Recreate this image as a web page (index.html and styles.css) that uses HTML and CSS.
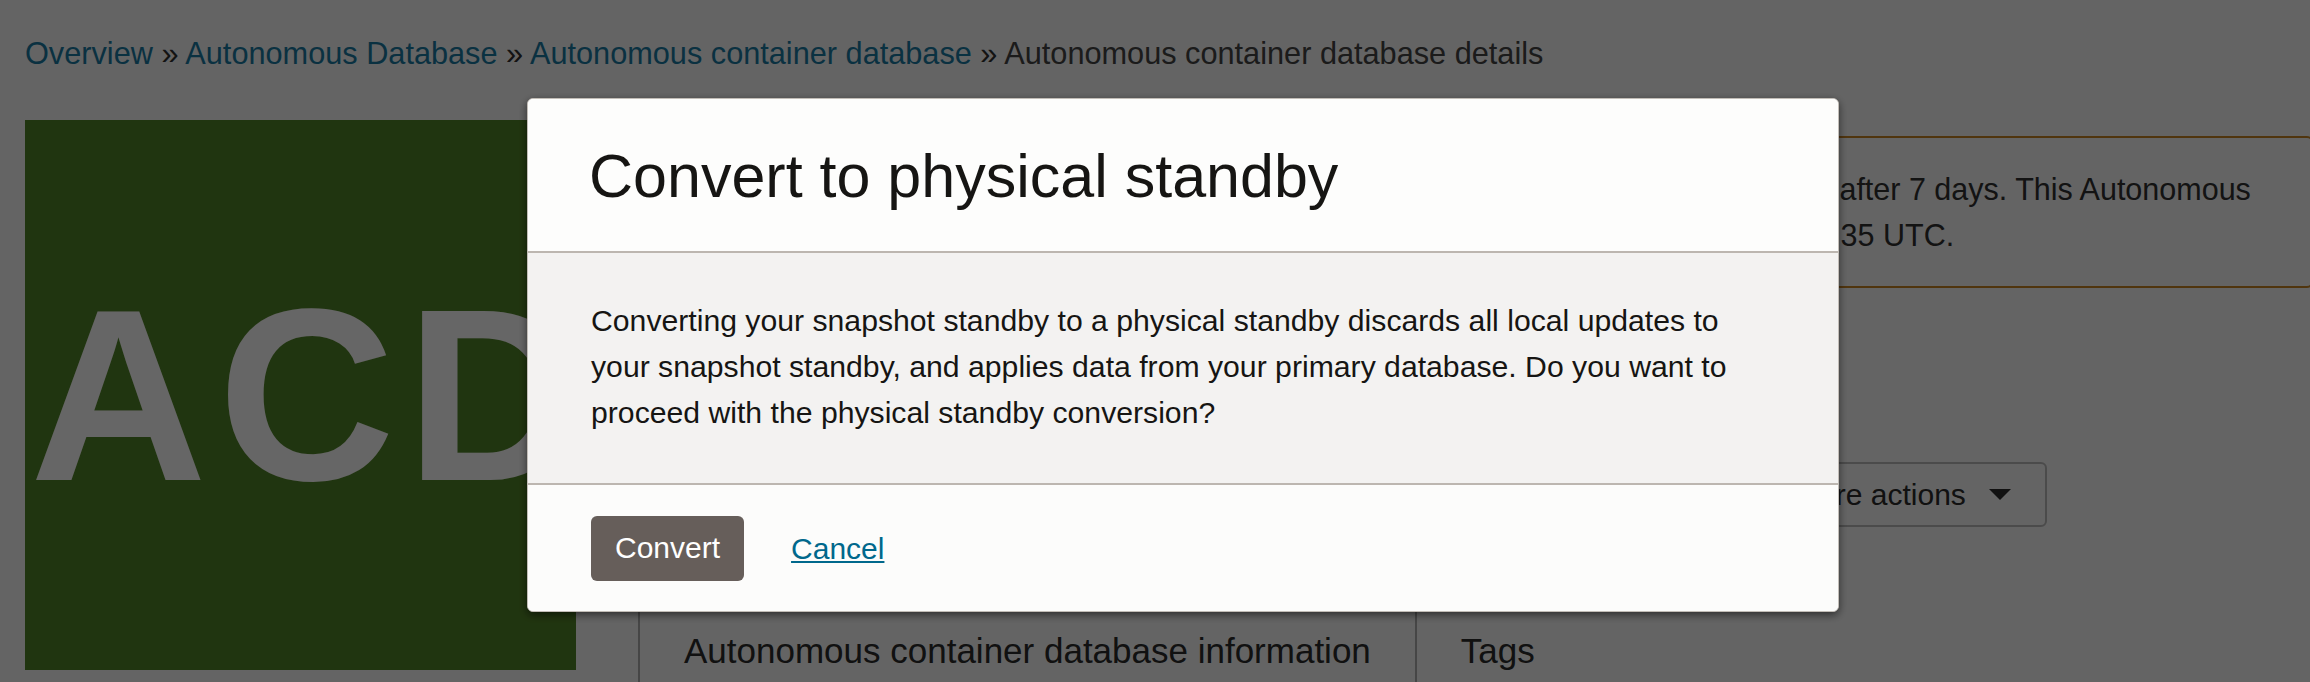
FILE: index.html
```html
<!DOCTYPE html>
<html lang="en">
<head>
<meta charset="utf-8">
<title>Autonomous container database details</title>
<link rel="stylesheet" href="styles.css">
</head>
<body>
<div class="page">
  <nav class="breadcrumb">
    <a class="crumb" href="#">Overview</a><span class="sep"> » </span><a class="crumb" href="#">Autonomous Database</a><span class="sep"> » </span><a class="crumb" href="#">Autonomous container database</a><span class="sep"> » </span><span class="current">Autonomous container database details</span>
  </nav>
  <div class="main">
    <div class="avatar"><span class="avatar-text">ACD</span></div>
    <div class="content">
      <div class="banner">
        <svg class="banner-icon" viewBox="0 0 40 40" width="36" height="36" aria-hidden="true">
          <path d="M20 4 L37 35 H3 Z" fill="#c7761c"/>
          <rect x="18.5" y="14" width="3" height="11" fill="#ffffff"/>
          <rect x="18.5" y="28" width="3" height="3" fill="#ffffff"/>
        </svg>
        <p class="banner-text">Your snapshot standby will be automatically converted back to the physical standby after 7 days. This Autonomous<br>Container Database will be converted automatically on Mon, Jun 17, 2024, at 10:12:35 UTC.</p>
      </div>
      <h1 class="resource-name">acd-snapshot-standby</h1>
      <div class="actions">
        <button class="btn" type="button">Restart</button>
        <button class="btn" type="button">Convert to physical standby</button>
        <button class="btn" type="button">Move resource</button>
        <button class="btn" type="button">Update license</button>
        <button class="btn btn-menu" type="button">More actions<svg class="caret" viewBox="0 0 22 11" width="22" height="11" aria-hidden="true"><path d="M0 0 H22 L11 11 Z" fill="#2b2b2b"/></svg></button>
      </div>
      <div class="tabs">
        <div class="tab">Autonomous container database information</div>
        <div class="tab">Tags</div>
      </div>
    </div>
  </div>
</div>

<div class="backdrop"></div>

<div class="dialog" role="dialog" aria-labelledby="dlg-title">
  <div class="dialog-header">
    <h2 class="dialog-title" id="dlg-title">Convert to physical standby</h2>
  </div>
  <div class="dialog-body">
    <p class="dialog-text">Converting your snapshot standby to a physical standby discards all local updates to your snapshot standby, and applies data from your primary database. Do you want to proceed with the physical standby conversion?</p>
  </div>
  <div class="dialog-footer">
    <button class="btn-primary" type="button">Convert</button>
    <a class="link" href="#">Cancel</a>
  </div>
</div>
</body>
</html>
```
FILE: styles.css
```css
html, body {
  margin: 0;
  padding: 0;
  overflow: hidden;
  background: #fafafa;
}

body {
  font-family: "Liberation Sans", Arial, sans-serif;
  color: #161513;
  width: 2310px;
  height: 682px;
}

.page {
  padding: 31px 0 0 25px;
}

/* breadcrumb */
.breadcrumb {
  font-size: 30.7px;
  line-height: 46px;
  white-space: nowrap;
}
.crumb {
  color: #1a7aa3;
  text-decoration: none;
}
.sep {
  color: #303030;
  white-space: pre;
}
.current {
  color: #454545;
}

/* main area */
.main {
  display: flex;
  gap: 62px;
  margin-top: 43px;
}

.avatar {
  flex: 0 0 auto;
  width: 551px;
  height: 550px;
  background: #528428;
  display: flex;
  align-items: center;
  padding-left: 5px;
  box-sizing: border-box;
}
.avatar-text {
  font-family: "Liberation Sans", Arial, sans-serif;
  font-weight: 700;
  font-size: 245px;
  line-height: 1;
  letter-spacing: 11px;
  color: #ffffff;
  white-space: nowrap;
}

.content {
  flex: 1 1 auto;
  padding-top: 16px;
  min-width: 0;
  margin-right: -3px;
}

/* banner */
.banner {
  display: flex;
  align-items: center;
  gap: 8px;
  border: 2px solid #c98525;
  border-radius: 6px;
  padding: 28px 28px 28px 24px;
}
.banner-icon {
  flex: 0 0 auto;
}
.banner-text {
  margin: 0;
  font-size: 30.5px;
  line-height: 46px;
  color: #303030;
  white-space: nowrap;
}

.resource-name {
  margin: 40px 0 0;
  font-size: 40px;
  line-height: 56px;
  font-weight: 400;
  color: #2b2b2b;
}

/* actions */
.actions {
  display: flex;
  gap: 15px;
  margin-top: 78px;
}
.btn {
  display: inline-flex;
  align-items: center;
  font-family: "Liberation Sans", Arial, sans-serif;
  font-size: 30px;
  line-height: 47px;
  padding: 7px 24px;
  border: 2px solid #bbbbbb;
  border-radius: 6px;
  background: transparent;
  color: #2b2b2b;
  white-space: nowrap;
}
.btn-menu {
  padding-right: 34px;
}
.caret {
  margin-left: 23px;
}

/* tabs */
.tabs {
  display: flex;
  margin-top: 73px;
}
.tab {
  font-size: 35px;
  line-height: 46px;
  padding: 28px 44px;
  border-left: 2px solid #b0b0b0;
  color: #2b2b2b;
  white-space: nowrap;
}

/* overlay */
.backdrop {
  position: fixed;
  inset: 0;
  background: rgba(0, 0, 0, 0.6);
}

.dialog {
  position: fixed;
  left: 527px;
  top: 98px;
  width: 1312px;
  box-sizing: border-box;
  border: 1px solid #c2bdb7;
  border-radius: 6px;
  overflow: hidden;
  box-shadow: 0 3px 8px rgba(0, 0, 0, 0.55);
  background: #fdfdfc;
}
.dialog-header {
  padding: 41px 63px 39px;
  background: #fdfdfc;
  border-bottom: 2px solid #bcb6b0;
}
.dialog-title {
  margin: 0 0 0 -2px;
  font-size: 61px;
  line-height: 72px;
  font-weight: 400;
  color: #161513;
}
.dialog-body {
  padding: 45px 63px 47px;
  background: #f3f2f1;
  border-bottom: 2px solid #bcb6b0;
}
.dialog-text {
  margin: 0;
  font-size: 30.2px;
  line-height: 46px;
  color: #161513;
}
.dialog-footer {
  display: flex;
  align-items: center;
  gap: 47px;
  padding: 31px 63px 30px;
  background: #fcfcfb;
}
.btn-primary {
  font-family: "Liberation Sans", Arial, sans-serif;
  font-size: 30px;
  line-height: 46px;
  padding: 9px 24px 10px;
  border: 0;
  border-radius: 6px;
  background: #665e5a;
  color: #ffffff;
}
.link {
  font-size: 30px;
  line-height: 46px;
  color: #00688c;
  text-decoration: underline;
  text-decoration-thickness: 2px;
  text-underline-offset: 2px;
}
```
